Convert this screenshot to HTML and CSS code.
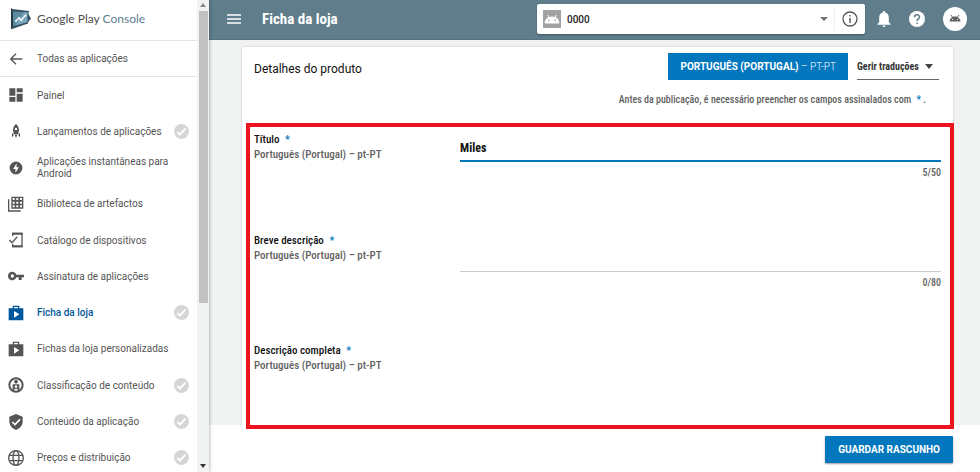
FILE: index.html
```html
<!DOCTYPE html>
<html lang="pt-PT">
<head>
    <meta charset="UTF-8">
    <meta name="viewport" content="width=device-width, initial-scale=1.0">
    <title>Ficha da loja - Google Play Console</title>
    <link rel="stylesheet" href="styles.css">
</head>
<body>
    <aside class="sidebar">
        <div class="sidebar-content">
            <div class="logo">
                <svg class="logo-icon" width="20" height="22" viewBox="0 0 20 22">
                    <path d="M1 3l17 1.500-1 4L20 10.500l-3 2L17 15 1 19z" fill="#78a7bb"/>
                    <path d="M1 3l12 1L4 18.200 1 19z" fill="#5b8ca1"/>
                    <path d="M0 0l2 1.500v18L0 21.500z" fill="#263b45"/>
                    <path d="M1 1l17 2v1.500L1 3.500zM1 18.500L17 14v1.500L1 21z" fill="#37525f"/>
                    <path d="M16.500 4.500L20 10.500l-3.500 4.500z" fill="#37525f"/>
                    <path d="M5 13l3-3 2 2 4.500-4.500" fill="none" stroke="#fff" stroke-width="1.300"/>
                    <circle cx="5" cy="13" r="1" fill="#fff"/><circle cx="8" cy="10" r="1" fill="#fff"/>
                    <circle cx="10.500" cy="12" r="1" fill="#fff"/><circle cx="14.500" cy="7.500" r="1" fill="#fff"/>
                </svg>
                <span>Google Play <span class="logo-console">Console</span></span>
            </div>
            <a class="nav-back" href="#">
                <svg class="icon icon-wide" viewBox="0 0 24 24"><path d="M21.500 12H4M12 4l-8 8 8 8" fill="none" stroke="currentColor" stroke-width="2"/></svg>
                <span>Todas as aplicações</span>
            </a>
            <nav class="nav">
                <a class="nav-item" href="#">
                    <svg class="icon icon-wide" viewBox="0 0 24 24"><path d="M2 2h9v11H2zM13 2h9v6h-9zM2 15h9v7H2zM13 10h9v12h-9z"/></svg>
                    <span>Painel</span>
                </a>
                <a class="nav-item" href="#">
                    <svg class="icon" viewBox="0 0 24 24"><path fill-rule="evenodd" d="M12 0c3.500 3 5 6.500 5 10 0 3-.8 6-2 8H9c-1.200-2-2-5-2-8 0-3.500 1.500-7 5-10zm0 6.500a2 2 0 100 4 2 2 0 000-4zM6.500 15l1.500 4-3 4v-5zM17.500 15L16 19l3 4v-5zM10 19h4l-2 5z"/></svg>
                    <span>Lançamentos de aplicações</span>
                    <svg class="check" viewBox="0 0 24 24"><circle cx="12" cy="12" r="12"/><path d="M5.500 12.500l4 4L18.500 7.500"/></svg>
                </a>
                <a class="nav-item" href="#">
                    <svg class="icon" viewBox="0 0 24 24"><path fill-rule="evenodd" d="M12 1a11 11 0 100 22 11 11 0 000-22zm1 3v6.500h4L11 20v-6.500H7z"/></svg>
                    <span>Aplicações instantâneas para Android</span>
                </a>
                <a class="nav-item" href="#">
                    <svg class="icon icon-wide" viewBox="0 0 24 24"><path d="M1 5v17.500h18" fill="none" stroke="currentColor" stroke-width="2"/><path fill-rule="evenodd" d="M5 1h18v18H5zM7 3v3h3V3zM12.500 3v3h3V3zM18 3v3h3V3zM7 8.500v3h3v-3zM12.500 8.500v3h3v-3zM18 8.500v3h3v-3zM7 14v3h3v-3zM12.500 14v3h3v-3zM18 14v3h3v-3z"/></svg>
                    <span>Biblioteca de artefactos</span>
                </a>
                <a class="nav-item" href="#">
                    <svg class="icon icon-wide" viewBox="0 0 24 24"><path d="M7 6V2h14v20H7v-4M2 12l4 4 8-9" fill="none" stroke="currentColor" stroke-width="2"/><path d="M6 1h16v3H6zM6 20h16v3H6z"/></svg>
                    <span>Catálogo de dispositivos</span>
                </a>
                <a class="nav-item" href="#">
                    <svg class="icon icon-wide" viewBox="0 0 24 24"><path fill-rule="evenodd" d="M12.600 10a6.500 6.500 0 100 4H16v4h4.500v-4H24v-4zM6.500 9.500a2.500 2.500 0 110 5 2.500 2.500 0 010-5z"/></svg>
                    <span>Assinatura de aplicações</span>
                </a>
                <a class="nav-item active" href="#">
                    <svg class="icon icon-wide" viewBox="0 0 24 24"><path fill-rule="evenodd" d="M7 5V1h10v4h6v18H1V5zm2-2v2h6V3zM9 9v10l8-5z"/></svg>
                    <span>Ficha da loja</span>
                    <svg class="check" viewBox="0 0 24 24"><circle cx="12" cy="12" r="12"/><path d="M5.500 12.500l4 4L18.500 7.500"/></svg>
                </a>
                <a class="nav-item" href="#">
                    <svg class="icon icon-wide" viewBox="0 0 24 24"><path fill-rule="evenodd" d="M7 5V1h10v4h6v18H1V5zm2-2v2h6V3zM9 9v10l8-5z"/></svg>
                    <span>Fichas da loja personalizadas</span>
                </a>
                <a class="nav-item" href="#">
                    <svg class="icon icon-wide" viewBox="0 0 24 24"><circle cx="12" cy="12" r="10" fill="none" stroke="currentColor" stroke-width="3"/><circle cx="12" cy="7" r="2.800"/><path fill-rule="evenodd" d="M7 11h10v10H7zm5 1.500a2 2 0 100 4 2 2 0 000-4zm-2.500 5.500v3h5v-3z"/></svg>
                    <span>Classificação de conteúdo</span>
                    <svg class="check" viewBox="0 0 24 24"><circle cx="12" cy="12" r="12"/><path d="M5.500 12.500l4 4L18.500 7.500"/></svg>
                </a>
                <a class="nav-item" href="#">
                    <svg class="icon icon-wide" viewBox="0 0 24 24"><path d="M12 0l10 4v7c0 6-4 11-10 13C6 22 2 17 2 11V4z"/><path d="M6.500 12l4 4 7.500-8" fill="none" stroke="#fff" stroke-width="2.500"/></svg>
                    <span>Conteúdo da aplicação</span>
                    <svg class="check" viewBox="0 0 24 24"><circle cx="12" cy="12" r="12"/><path d="M5.500 12.500l4 4L18.500 7.500"/></svg>
                </a>
                <a class="nav-item" href="#">
                    <svg class="icon icon-wide" viewBox="0 0 24 24"><g fill="none" stroke="currentColor" stroke-width="2"><circle cx="12" cy="12" r="11"/><ellipse cx="12" cy="12" rx="4.500" ry="11"/><path d="M2 8h20M2 16h20"/></g></svg>
                    <span>Preços e distribuição</span>
                    <svg class="check" viewBox="0 0 24 24"><circle cx="12" cy="12" r="12"/><path d="M5.500 12.500l4 4L18.500 7.500"/></svg>
                </a>
            </nav>
        </div>
        <div class="scrollbar">
            <svg width="6" height="4" viewBox="0 0 6 4"><path d="M0 4l3-4 3 4z" fill="#888"/></svg>
            <div class="scrollbar-track"><div class="scrollbar-thumb"></div></div>
            <svg width="6" height="4" viewBox="0 0 6 4"><path d="M0 0h6L3 4z" fill="#333"/></svg>
        </div>
    </aside>

    <div class="page">
        <header class="topbar">
            <button class="icon-button" type="button" aria-label="Menu">
                <svg width="14" height="10" viewBox="0 0 14 10"><path d="M0 1h14M0 5h14M0 9h14" stroke="#fff" stroke-width="1.500"/></svg>
            </button>
            <h1>Ficha da loja</h1>
            <div class="app-picker">
                <svg class="app-icon" width="18" height="18" viewBox="0 0 18 18"><path d="M0 0h18v18H0z" fill="#a2a2a2"/><path d="M2 13c.3-3 2-5.300 4-6L4.500 5M16 13c-.3-3-2-5.300-4-6l1.500-2" fill="none" stroke="#fff"/><path fill-rule="evenodd" d="M2 13.500c.3-4 3.500-7 7-7s6.700 3 7 7zM6 9.500a.8.800 0 100 1.600.8.800 0 000-1.600zm6 0a.8.800 0 100 1.600.8.800 0 000-1.600z" fill="#fff"/></svg>
                <select class="app-select" aria-label="Aplicação">
                    <option>0000</option>
                </select>
                <svg width="8" height="4" viewBox="0 0 8 4"><path d="M0 0h8L4 4z" fill="#707070"/></svg>
                <button class="icon-button info" type="button" aria-label="Informações">
                    <svg width="16" height="16" viewBox="0 0 16 16"><circle cx="8" cy="8" r="7" fill="none" stroke="#555" stroke-width="1.300"/><path d="M8 7v5M8 4v1.500" stroke="#555" stroke-width="1.400"/></svg>
                </button>
            </div>
            <button class="icon-button" type="button" aria-label="Notificações">
                <svg width="14" height="16" viewBox="0 0 14 16"><path d="M7 0c.8 0 1.300.6 1.300 1.500 2.300.6 3.500 2.500 3.500 5V11l1.700 2v.7H.500V13l1.700-2V6.500c0-2.500 1.200-4.400 3.500-5C5.700.6 6.200 0 7 0zM5.500 14.500h3C8.500 15.400 7.900 16 7 16s-1.500-.6-1.500-1.500z" fill="#fff"/></svg>
            </button>
            <button class="icon-button" type="button" aria-label="Ajuda">
                <svg width="16" height="16" viewBox="0 0 16 16"><circle cx="8" cy="8" r="8" fill="#fff"/><path d="M5.500 6.200a2.500 2.500 0 115 0c0 1.600-2.500 1.900-2.500 3.800M8 11.500V13" fill="none" stroke="#607d8b" stroke-width="1.500"/></svg>
            </button>
            <button class="icon-button" type="button" aria-label="Conta">
                <svg width="24" height="24" viewBox="0 0 24 24"><circle cx="12" cy="12" r="12" fill="#fff"/><path d="M8 8l2 3M16 8l-2 3" stroke="#616161"/><path fill-rule="evenodd" d="M6.500 14.500c.3-3 2.700-5 5.500-5s5.200 2 5.500 5zM9.500 12a.6.600 0 100 1.200.6.600 0 000-1.200zm5 0a.6.600 0 100 1.200.6.600 0 000-1.200z" fill="#616161"/></svg>
            </button>
        </header>

        <main class="content">
            <form class="card" id="listing">
                <div class="card-header">
                    <h2>Detalhes do produto</h2>
                    <button class="button language" type="button">PORTUGUÊS (PORTUGAL) <span>– PT-PT</span></button>
                    <div class="translations">
                        <select aria-label="Gerir traduções">
                            <option>Gerir traduções</option>
                        </select>
                        <svg width="8" height="5" viewBox="0 0 8 5"><path d="M0 0h8L4 5z" fill="#444"/></svg>
                    </div>
                </div>
                <p class="note">Antes da publicação, é necessário preencher os campos assinalados com <span class="required">*</span> .</p>

                <div class="fields">
                    <div class="field">
                        <label for="title">Título <span class="required">*</span><small>Português (Portugal) – pt-PT</small></label>
                        <div class="control">
                            <input class="focused" type="text" id="title" value="Miles" maxlength="50">
                            <span class="counter">5/50</span>
                        </div>
                    </div>
                    <div class="field">
                        <label for="short">Breve descrição <span class="required">*</span><small>Português (Portugal) – pt-PT</small></label>
                        <div class="control">
                            <textarea id="short" maxlength="80"></textarea>
                            <span class="counter">0/80</span>
                        </div>
                    </div>
                    <div class="field">
                        <label for="full">Descrição completa <span class="required">*</span><small>Português (Portugal) – pt-PT</small></label>
                        <div class="control">
                            <textarea class="full" id="full" maxlength="4000"></textarea>
                        </div>
                    </div>
                </div>
            </form>
        </main>

        <footer class="actions">
            <button class="button save" type="submit" form="listing">GUARDAR RASCUNHO</button>
        </footer>
    </div>
</body>
</html>
```

FILE: styles.css
```css
* { box-sizing: border-box; }
body { display: flex; height: 100vh; margin: 0; overflow: hidden; background: #fff; color: #111; font-family: Roboto, "Liberation Sans", sans-serif; font-size: 10px; }
button, input, select, textarea { margin: 0; padding: 0; border: none; border-radius: 0; outline: none; background: none; color: inherit; font: inherit; }
button, select { cursor: pointer; }
select { appearance: none; }
svg { display: block; flex: none; }
h1, h2, p { margin: 0; }

/* Sidebar */
.sidebar { display: flex; flex: none; width: 209px; box-shadow: 1px 0 3px rgba(0, 0, 0, 0.25); z-index: 1; }
.sidebar-content { display: flex; flex: 1; flex-direction: column; background: #fff; }
.logo { display: flex; align-items: center; gap: 6px; height: 41px; padding: 0 0 3px 11px; border-bottom: 1px solid #e4e4e4; color: #4d4d4d; font-family: Lato, sans-serif; font-size: 12px; }
.logo-console { color: #5c7f90; }
.nav-back, .nav-item { display: flex; align-items: center; gap: 13px; padding: 0 8px; color: #555; line-height: 12px; text-decoration: none; }
.nav-back { height: 36px; border-bottom: 1px solid #e4e4e4; }
.nav { display: flex; flex: 1; flex-direction: column; margin-bottom: -4px; }
.nav-item { flex: 1; }
.nav-item.active { color: #01579b; font-weight: 500; }
.nav-item span { flex: 1; margin-right: -13px; padding-top: 1px; }
.icon { width: 16px; height: 16px; padding: 1px; fill: currentColor; }
.icon-wide { padding: 0; }
.check { width: 15px; height: 15px; }
.check circle { fill: #d6d6d6; }
.check path { fill: none; stroke: #fff; stroke-width: 3; }
.scrollbar { display: flex; flex: none; flex-direction: column; align-items: center; gap: 4px; width: 12px; padding: 3px 0 4px; background: #f1f3f3; }
.scrollbar-track { flex: 1; width: 9px; }
.scrollbar-thumb { height: 65%; background: #c1c1c1; }

/* Top bar */
.page { display: flex; flex: 1; flex-direction: column; min-width: 0; }
.topbar { display: flex; flex: none; align-items: center; height: 40px; gap: 18px; padding: 0 13px 2px 18px; border-bottom: 1px solid #54717f; background: #607d8b; }
.topbar h1 { flex: 1; padding-left: 3px; color: #fff; font-family: "Roboto Condensed", Roboto, sans-serif; font-size: 15px; font-weight: 700; }
.icon-button { display: flex; }
.app-picker { display: flex; align-items: center; width: 328px; height: 30px; margin-right: -6px; padding-left: 6px; border-radius: 2px; background: #fff; box-shadow: 0 1px 2px rgba(0, 0, 0, 0.3); }
.app-select { flex: 1; padding: 2px 0 0 6px; color: #222; font-weight: 500; }
.info { align-items: center; height: 24px; margin-left: 6px; padding: 0 7px; border-left: 1px solid #eee; }

/* Listing form */
.content { flex: 1; min-height: 0; padding: 7px 27px 0 33px; background: #f1f3f3; }
.card { height: 100%; padding: 6px 12px 0; background: #fff; box-shadow: 0 0 2px rgba(0, 0, 0, 0.2); font-family: "Roboto Condensed", Roboto, sans-serif; font-weight: 500; }
.card-header { display: flex; align-items: center; gap: 9px; padding-right: 2px; }
.card h2 { flex: 1; padding-top: 5px; font-family: Roboto, sans-serif; font-size: 12px; font-weight: 400; }
.button { height: 27px; padding: 0 12px; background: #0277bd; color: #fff; font-family: Roboto, sans-serif; font-size: 10px; font-weight: 700; }
.button span { font-weight: 300; }
.translations { display: flex; align-items: center; gap: 6px; height: 27px; padding-right: 6px; border-bottom: 1px solid #666; color: #333; font-weight: 700; }
.note { padding: 13px 15px 0 0; color: #616161; line-height: 14px; text-align: right; }
.required { margin-left: 3px; color: #0277bd; }
.fields { position: relative; display: grid; gap: 52px; margin-top: 22px; }
.fields::after { content: ""; position: absolute; inset: -6px -13px auto -8px; height: 298px; border: 4px solid #ec1220; pointer-events: none; }
.field { display: grid; grid-template-columns: 3fr 7fr; }
.field label { padding-top: 3px; font-size: 11px; line-height: 15px; }
.field small { display: block; color: #616161; font-size: 11px; }
.control { display: flex; flex-direction: column; gap: 5px; }
.control input, .control textarea { height: 42px; border-bottom: 1px solid #ccc; font-size: 12px; resize: none; }
.control input { height: 33px; padding-top: 6px; font-weight: 700; }
.control .focused { border-bottom: 2px solid #0277bd; }
.control .full { border: none; }
.counter { height: 11px; color: #616161; line-height: 12px; text-align: right; }

/* Bottom actions */
.actions { display: flex; flex: none; justify-content: flex-end; height: 47px; padding: 11px 27px 0; background: #fff; }
.save { padding: 0 13px; border-radius: 1px; box-shadow: 0 1px 2px rgba(0, 0, 0, 0.4); }
```
